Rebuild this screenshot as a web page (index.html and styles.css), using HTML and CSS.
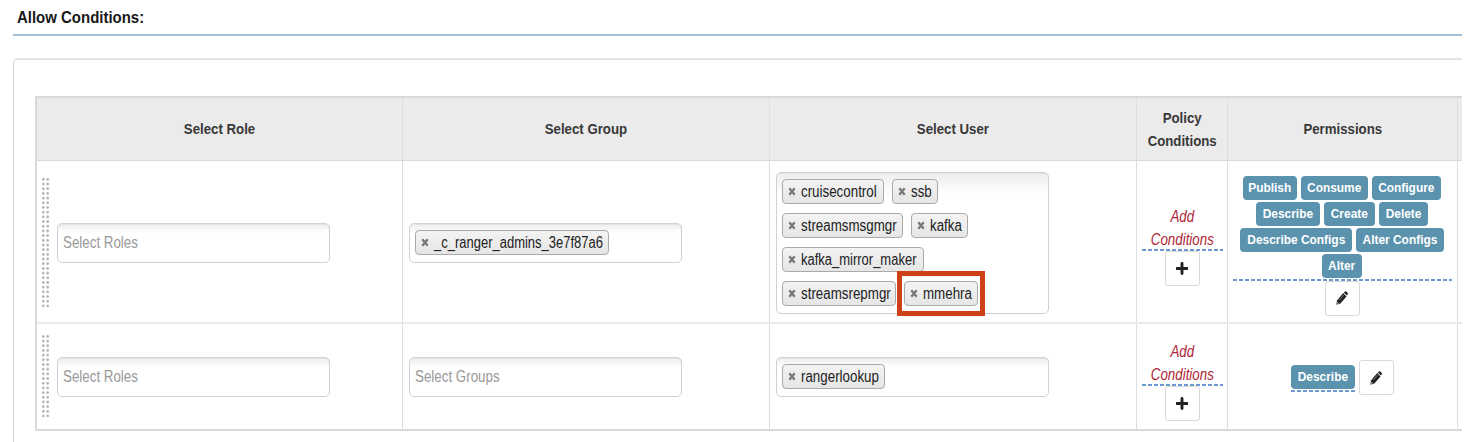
FILE: index.html
```html
<!DOCTYPE html>
<html lang="en">
<head>
<meta charset="utf-8">
<title>Allow Conditions</title>
<link rel="stylesheet" href="styles.css">
</head>
<body>
<svg width="0" height="0" class="defs">
  <symbol id="x" viewBox="0 0 8 9"><path d="M1.3 1.3L6.7 7.7M6.7 1.3L1.3 7.7" stroke="#777" stroke-width="2.3" fill="none"/></symbol>
  <symbol id="plus" viewBox="0 0 12 12"><path d="M6 1v10M1 6h10" stroke="#222" stroke-width="2.9" stroke-linecap="round" fill="none"/></symbol>
  <symbol id="pencil" viewBox="0 0 12 14"><path d="M0.4 13.7L1 9.4L7.2 2L10.5 5.4L4.4 12.4Z" fill="#222"/><path d="M7.8 1.4L9 .4Q9.8 0 10.4.6L11.7 2.1Q12.2 2.9 11.6 3.6L10.9 4.6Z" fill="#222"/><path d="M3.2 9.2L7.6 4" stroke="#aaa" stroke-width=".6" fill="none"/><circle cx="1.9" cy="12" r=".8" fill="#ddd"/></symbol>
</svg>
<main class="page">
  <h1 class="title"><span class="t">Allow Conditions:</span></h1>
  <section class="panel">
    <div class="table">
      <div class="row head">
        <div class="cell"><span class="t">Select Role</span></div>
        <div class="cell"><span class="t">Select Group</span></div>
        <div class="cell"><span class="t">Select User</span></div>
        <div class="cell"><span class="t">Policy<br>Conditions</span></div>
        <div class="cell"><span class="t">Permissions</span></div>
        <div class="cell"></div>
      </div>
      <div class="row first">
        <div class="cell field"><i class="grip"></i><div class="box"><span class="t hint">Select Roles</span></div></div>
        <div class="cell field"><div class="box"><div class="chip narrow" style="width:194px"><svg><use href="#x"/></svg><span class="t">_c_ranger_admins_3e7f87a6</span></div></div></div>
        <div class="cell field"><div class="box tall">
          <div class="chip" style="width:102px"><svg><use href="#x"/></svg><span class="t">cruisecontrol</span></div>
          <div class="chip" style="width:46px"><svg><use href="#x"/></svg><span class="t">ssb</span></div>
          <div class="chip" style="width:121px"><svg><use href="#x"/></svg><span class="t">streamsmsgmgr</span></div>
          <div class="chip" style="width:57px"><svg><use href="#x"/></svg><span class="t">kafka</span></div>
          <div class="chip narrow" style="width:142px"><svg><use href="#x"/></svg><span class="t">kafka_mirror_maker</span></div>
          <div class="chip" style="width:114px"><svg><use href="#x"/></svg><span class="t">streamsrepmgr</span></div>
          <div class="chip marked" style="width:74px"><svg><use href="#x"/></svg><span class="t">mmehra</span></div>
        </div></div>
        <div class="cell cond"><div class="add"><span class="t">Add<br>Conditions</span></div><div class="btn"><svg class="plus"><use href="#plus"/></svg></div></div>
        <div class="cell perm">
          <div class="labels">
            <div class="line"><b style="width:54px"><span class="t">Publish</span></b><b style="width:67px"><span class="t">Consume</span></b><b style="width:69px"><span class="t">Configure</span></b></div>
            <div class="line"><b style="width:64px"><span class="t">Describe</span></b><b style="width:51px"><span class="t">Create</span></b><b style="width:49px"><span class="t">Delete</span></b></div>
            <div class="line"><b style="width:112px"><span class="t">Describe Configs</span></b><b style="width:88px"><span class="t">Alter Configs</span></b></div>
            <div class="line"><b style="width:40px"><span class="t">Alter</span></b></div>
          </div>
          <div class="btn"><svg class="pencil"><use href="#pencil"/></svg></div>
        </div>
        <div class="cell"></div>
      </div>
      <div class="row second">
        <div class="cell field"><i class="grip"></i><div class="box"><span class="t hint">Select Roles</span></div></div>
        <div class="cell field"><div class="box"><span class="t hint">Select Groups</span></div></div>
        <div class="cell field"><div class="box"><div class="chip" style="width:103px"><svg><use href="#x"/></svg><span class="t">rangerlookup</span></div></div></div>
        <div class="cell cond"><div class="add"><span class="t">Add<br>Conditions</span></div><div class="btn"><svg class="plus"><use href="#plus"/></svg></div></div>
        <div class="cell perm inline">
          <div class="labels"><div class="line"><b style="width:64px"><span class="t">Describe</span></b></div></div>
          <div class="btn"><svg class="pencil"><use href="#pencil"/></svg></div>
        </div>
        <div class="cell"></div>
      </div>
    </div>
  </section>
</main>
</body>
</html>
```
FILE: styles.css
```css
*, *::after { box-sizing: border-box; }
body { margin: 0; background: #fff; font: 15.8px/23px "Liberation Sans", Arial, sans-serif; color: #222; overflow: hidden; }
.defs { display: block; }
.page { width: 1462px; height: 442px; padding-left: 13px; overflow: hidden; }
.t { display: block; flex: none; white-space: nowrap; transform: scaleX(.845); transform-origin: 0 50%; }
.title { margin: 0 0 22px; height: 36px; padding: 6px 0 0 4px; font-size: 17px; line-height: 24px; color: #181818; border-bottom: 2px solid #a5bfd6; }
.title .t { width: max-content; transform: scaleX(.88); }
.panel { width: 1500px; height: 400px; padding: 36px 0 0 21px; border: 2px solid #e4e4e4; border-left: 1px solid #d5d5d5; border-radius: 5px 0 0 0; }
.table { width: 1480px; border: 2px solid #d9d9d9; }
.row { display: grid; grid-template-columns: 366px 367px 367px 91px 230px 1fr; }
.head { height: 63px; background: #ebebeb; border-bottom: 1px solid #d9d9d9; font-weight: bold; font-size: 15.4px; color: #383838; }
.head .cell { padding-bottom: 1px; }
.first { height: 163px; border-bottom: 2px solid #eaeaea; }
.second { height: 105px; }
.cell { display: flex; align-items: center; justify-content: center; border-right: 1px solid #dedede; min-width: 0; text-align: center; }
.head .t, .add .t, .perm .t { transform-origin: 50% 50%; }
.head .t { transform: scaleX(.86); }
.perm .t { transform: scaleX(.87); }
.field { justify-content: flex-start; padding: 0 0 0 6px; }
.field:nth-child(2), .field:nth-child(3) { padding-left: 5.5px; }
.first .field { padding-top: 2px; }
.grip { width: 9px; margin: 14px 6px 14px -2px; align-self: stretch; background: radial-gradient(circle, #aaa 0, #aaa .9px, transparent 1.5px) 0 0 / 4.5px 4.7px; }
.second .grip { margin: 10px 6px 12px -2px; }
.box { display: flex; align-items: center; width: 273px; height: 40px; padding-left: 5px; border: 1px solid #cfd1da; border-radius: 5px; background: linear-gradient(#ededed, #fff 9px); box-shadow: inset 0 1px #e3e3e6; }
.grip + .box { margin-left: 1px; }
.hint { color: #999; }
.tall { height: 142px; padding: 6px 30px 0 5px; flex-wrap: wrap; align-content: flex-start; gap: 9px 8px; background: linear-gradient(#ededed, #fff 22px); }
.chip { position: relative; display: flex; align-items: center; height: 25px; padding-left: 5px; border: 1px solid #aaa; border-radius: 4px; background: linear-gradient(#f3f3f3, #e6e6e6); }
.chip svg { flex: none; width: 8px; height: 9px; margin-right: 5px; }
.narrow .t { transform: scaleX(.822); }
.marked::after { content: ""; position: absolute; left: -8px; top: -11px; width: 88px; height: 45px; border: 5px solid #cc4115; }
.cond { flex-direction: column; padding-top: 7px; }
.add { display: flex; justify-content: center; width: 81px; height: 47px; font-style: italic; color: #ad2638; }
.add .t { padding-top: 1px; }
.add, .labels { background: repeating-linear-gradient(90deg, #6d99d3 0 4px, transparent 4px 6px) 0 100% / 100% 2px no-repeat; }
.btn { display: flex; align-items: center; justify-content: center; flex: none; width: 35px; height: 35px; border: 1px solid #d9d9d9; border-radius: 3px; background: #fff; }
.plus { width: 12px; height: 13px; }
.pencil { width: 12px; height: 14px; }
.perm { flex-direction: column; padding: 8px 1px 0 0; font-size: 13.7px; color: #fff; }
.labels { display: flex; flex-direction: column; gap: 2px; width: 219px; padding-bottom: 3px; }
.line { display: flex; justify-content: center; gap: 4px; }
.line b { display: flex; justify-content: center; height: 24px; line-height: 24px; background: #5b93ae; border-radius: 4px; }
.inline { flex-direction: row; gap: 4px; padding-top: 2px; }
.inline .labels { width: 64px; margin-top: 1px; }
```
